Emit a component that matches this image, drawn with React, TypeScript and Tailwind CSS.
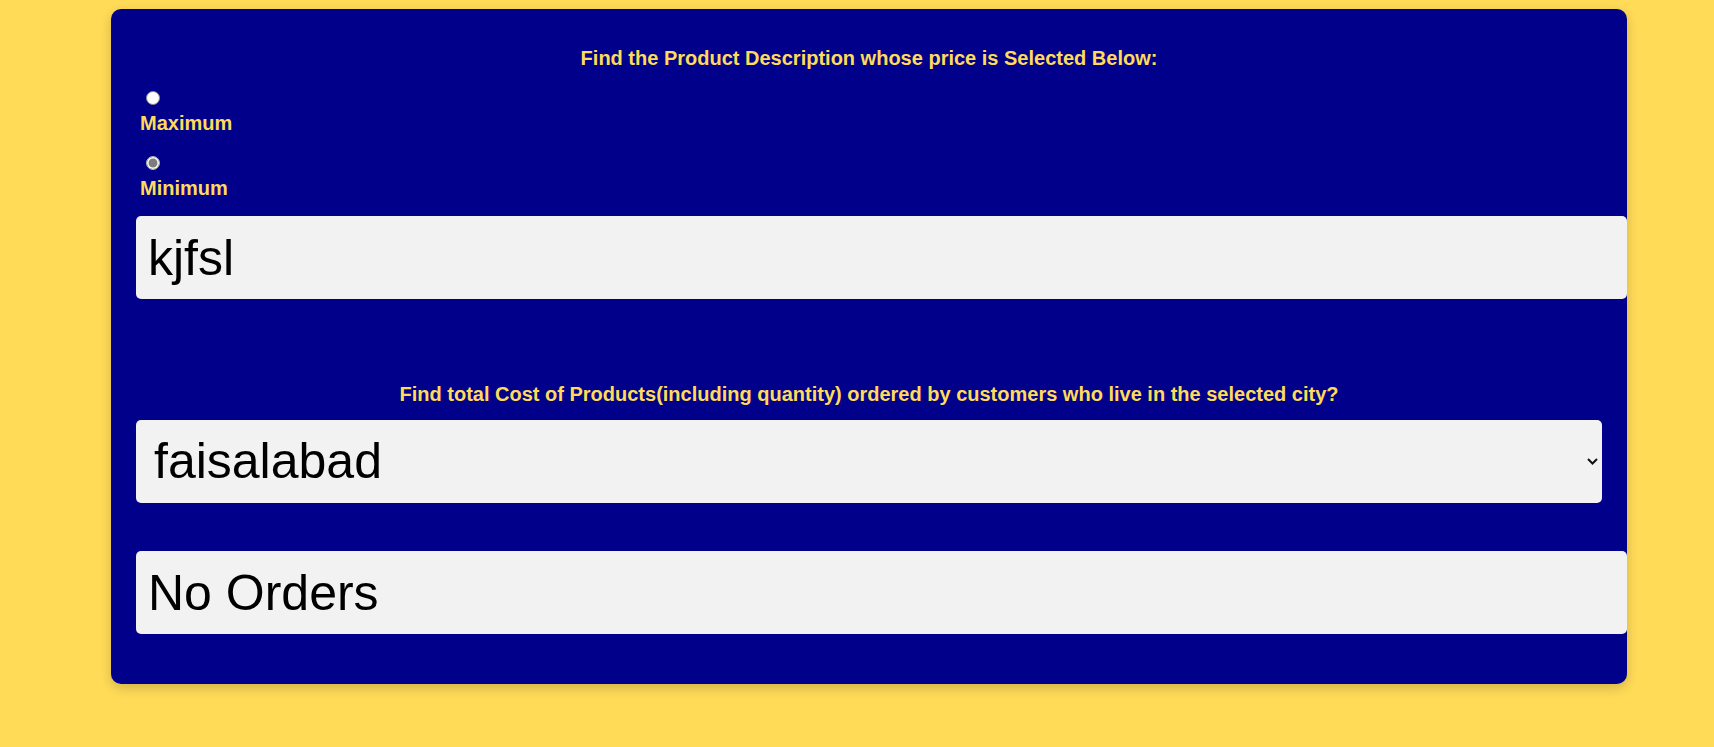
import { useState } from 'react';

const CITIES = ['faisalabad', 'lahore', 'karachi', 'islamabad'];

export default function App() {
  const [mode, setMode] = useState<'max' | 'min'>('min');
  const [city, setCity] = useState('faisalabad');

  return (
    <div className="min-h-screen bg-[#ffdb58] pt-[9px] font-['Liberation_Sans',Arial,sans-serif]">
      <div className="ml-[111px] w-[1516px] rounded-[10px] bg-[#00008b] px-[25px] pt-[38px] pb-[50px] shadow-[0_4px_12px_rgba(0,0,0,0.18)]">
        <h2 className="text-center text-[20px] leading-[23px] font-bold text-[#ffdb58]">
          Find the Product Description whose price is Selected Below:
        </h2>

        <div className="mt-[21px] pl-[4px]">
          <div className="flex flex-col items-start">
            <input
              type="radio"
              name="price"
              id="max"
              checked={mode === 'max'}
              onChange={() => setMode('max')}
              className="ml-[6px] h-[14px] w-[14px] appearance-none rounded-full border border-[#8a8a8a] bg-white checked:border-[#b5b5b5] checked:bg-[#7c7c7c] checked:shadow-[inset_0_0_0_1.5px_#fff]"
            />
            <label htmlFor="max" className="mt-[7px] text-[20px] leading-[23px] font-bold text-[#ffdb58]">
              Maximum
            </label>
          </div>
          <div className="mt-[21px] flex flex-col items-start">
            <input
              type="radio"
              name="price"
              id="min"
              checked={mode === 'min'}
              onChange={() => setMode('min')}
              className="ml-[6px] h-[14px] w-[14px] appearance-none rounded-full border border-[#8a8a8a] bg-white checked:border-[#b5b5b5] checked:bg-[#7c7c7c] checked:shadow-[inset_0_0_0_1.5px_#fff]"
            />
            <label htmlFor="min" className="mt-[7px] text-[20px] leading-[23px] font-bold text-[#ffdb58]">
              Minimum
            </label>
          </div>
        </div>

        <input
          readOnly
          value="kjfsl"
          className="mt-[16px] block h-[83px] w-[1491px] rounded-[5px] bg-[#f2f2f2] pl-[12px] text-[50px] text-black outline-none"
        />

        <h2 className="mt-[84px] text-center text-[20px] leading-[23px] font-bold text-[#ffdb58]">
          Find total Cost of Products(including quantity) ordered by customers who live in the selected city?
        </h2>

        <div className="relative mt-[14px]">
          <select
            value={city}
            onChange={(e) => setCity(e.target.value)}
            className="block h-[83px] w-full appearance-none rounded-[5px] bg-[#f2f2f2] pl-[18px] text-[50px] text-black outline-none"
          >
            {CITIES.map((c) => (
              <option key={c} value={c}>{c}</option>
            ))}
          </select>
          <svg
            className="pointer-events-none absolute top-[38px] right-[4px]"
            width="11"
            height="7"
            viewBox="0 0 11 7"
            fill="none"
          >
            <path d="M1 1 L5.5 5.5 L10 1" stroke="#111" strokeWidth="2" />
          </svg>
        </div>

        <input
          readOnly
          value="No Orders"
          className="mt-[48px] block h-[83px] w-[1491px] rounded-[5px] bg-[#f2f2f2] pl-[12px] text-[50px] text-black outline-none"
        />
      </div>
    </div>
  );
}
